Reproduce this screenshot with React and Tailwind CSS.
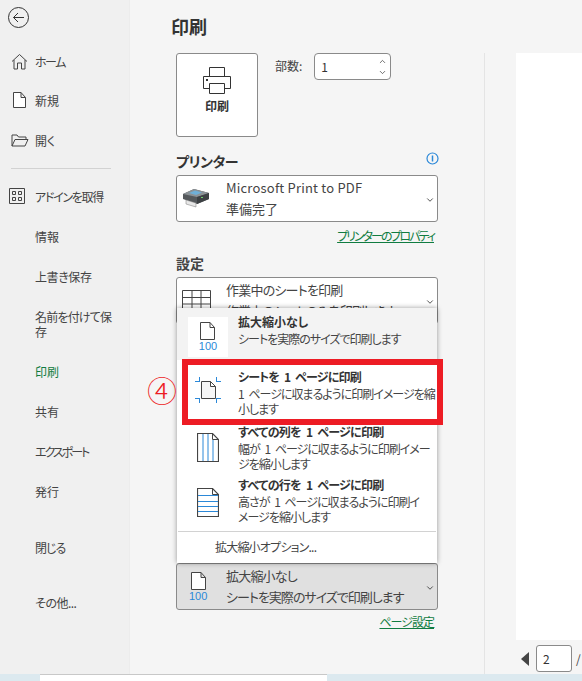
import React from 'react';
import { ChevronDown, ChevronUp } from 'lucide-react';

const FONT = "font-['Noto_Sans_CJK_JP','Noto_Sans',sans-serif] [font-feature-settings:'palt']";

const PageIcon = ({ x = 0, y = 0, w = 14, h = 19 }) => (
    <path
        d={`M${x + 0.5} ${y + 0.5}H${x + w - 5}L${x + w - 0.5} ${y + 5.5}V${y + h - 0.5}H${x + 0.5}ZM${x + w - 5} ${y + 0.5}V${y + 5.5}H${x + w - 0.5}`}
        fill="#fff"
        stroke="#444"
        strokeWidth="1"
    />
);

const Page100 = () => (
    <div className="flex flex-col items-center">
        <svg width="15" height="18" viewBox="0 0 15 18"><PageIcon w={15} h={18} /></svg>
        <span className="font-['Liberation_Sans',sans-serif] text-[11px] leading-[11px] text-[#2b88d8] mt-[1px]">100</span>
    </div>
);

const SideItem = ({ icon, label, className = '', labelClass = '' }) => (
    <div className={`relative flex items-center pl-[35px] text-[12px] leading-[15px] text-[#444] ${className}`}>
        {icon && <div className="absolute left-[9px] top-0 bottom-0 flex items-center">{icon}</div>}
        <span className={`whitespace-pre-line ${labelClass}`}>{label}</span>
    </div>
);

const Sidebar = () => (
    <div className="w-[130px] shrink-0 bg-[#f0f0f0] border-r border-[#ececec] flex flex-col">
        <div className="h-[41px] pl-[8px] pt-[7px]">
            <svg width="21" height="21" viewBox="0 0 21 21" fill="none" stroke="#333">
                <circle cx="10.5" cy="10.5" r="10" />
                <path d="M16 10.5H5.5M10 6l-4.5 4.500L10 15" />
            </svg>
        </div>
        <SideItem
            className="h-[40px]"
            labelClass="tracking-[-1.5px]"
            label="ホーム"
            icon={
                <svg width="17" height="17" viewBox="0 0 17 17" fill="none" stroke="#444" className="ml-[2px]">
                    <path d="M1 8.500L8.500 1.500l7.500 7M3 7v9h3.500v-6h4v6H14V7" />
                </svg>
            }
        />
        <SideItem
            className="h-[39px]"
            label="新規"
            icon={
                <svg width="14" height="17" viewBox="0 0 14 17" className="ml-[4px]"><PageIcon w={13} h={16} /></svg>
            }
        />
        <SideItem
            className="h-[40px]"
            label="開く"
            icon={
                <svg width="18" height="13" viewBox="0 0 18 13" fill="none" stroke="#444" className="ml-[2px]">
                    <path d="M1 12V1h5l1.500 2H15v2.500M1 12l3-6.500h13L14 12Z" />
                </svg>
            }
        />
        <div className="mt-[8px] ml-[11px] w-[100px] h-[1px] bg-[#d2d2d2]" />
        <SideItem
            className="h-[54px]"
            labelClass="tracking-[-1.3px]"
            label="アドインを取得"
            icon={
                <svg width="16" height="16" viewBox="0 0 16 16" fill="none" stroke="#444">
                    <path d="M.5.500h15v15H.5zM3.500 3.500h3v3h-3zM9.500 3.500h3v3h-3zM3.500 9.500h3v3h-3zM9.500 9.500h3v3h-3z" />
                </svg>
            }
        />
        <SideItem className="h-[26px]" label="情報" />
        <SideItem className="h-[54px]" labelClass="tracking-[-0.4px]" label="上書き保存" />
        <div className="h-[6px]" />
        <SideItem className="h-[30px]" labelClass="tracking-[-0.8px]" label={'名前を付けて保\n存'} />
        <div className="h-[23px]" />
        <SideItem className="h-[18px] !text-[#107c41]" label="印刷" />
        <SideItem className="h-[62px]" label="共有" />
        <SideItem className="h-[18px]" labelClass="tracking-[-2px]" label="エクスポート" />
        <SideItem className="h-[62px]" label="発行" />
        <div className="h-[6px]" />
        <SideItem className="h-[38px]" labelClass="tracking-[-1px]" label="閉じる" />
        <SideItem className="h-[72px]" labelClass="tracking-[-0.5px]" label="その他..." />
    </div>
);

const Dropdown = ({ icon, line1, line2, line1Class = '', line2Class = '', iconClass = 'pl-[5px]', className = 'bg-white' }) => (
    <div className={`relative h-[47px] rounded-[3px] border border-[#8a8a8a] flex items-center pl-[49px] pr-[20px] pb-[2px] text-[13px] text-[#444] ${className}`}>
        <div className={`absolute left-0 w-[49px] inset-y-0 flex items-center ${iconClass}`}>{icon}</div>
        <div className="flex flex-col gap-[4px] leading-[17px] whitespace-nowrap">
            <span className={line1Class}>{line1}</span>
            <span className={line2Class}>{line2}</span>
        </div>
        <ChevronDown className="absolute right-[2px] top-[19px]" size={10} strokeWidth={2} color="#333" />
    </div>
);

const PrinterColor = () => (
    <svg width="29" height="21" viewBox="0 3 29 21">
        <path d="M1 9l11-5 15 4v6l-12 5L1 14Z" fill="#55595c" />
        <path d="M1 9l11-5 15 4-12 4Z" fill="#8c9296" />
        <path d="M7 8l6-2.500 7 2-6 2.500Z" fill="#6fb0d8" />
        <path d="M4 15l10 3 0 4-10-3Z" fill="#e8e8e8" stroke="#777" strokeWidth=".5" />
        <path d="M15 12l12-4v6l-12 5Z" fill="#3d4144" />
        <rect x="19" y="12" width="2" height="1" fill="#6fd06f" />
    </svg>
);

const SheetGrid = () => (
    <svg width="29" height="21" viewBox="0 0 29 21" fill="none" stroke="#444">
        <path d="M.5.500h28v20H.5zM.5 7.500h28M.5 14h28M10 .500v20M19 .500v20" />
    </svg>
);

const MenuItem = ({ icon, title, desc, className = '', titleClass = '', descClass = 'tracking-[-1px]' }) => (
    <div className={`flex ${className}`}>
        <div className="w-[61px] shrink-0 flex justify-center">{icon}</div>
        <div className="text-[12px] leading-[15px] text-[#444] w-[196px] [word-spacing:3px]">
            <div className={`font-bold text-[#333] ${titleClass}`}>{title}</div>
            <div className={`mt-[2px] whitespace-pre ${descClass}`}>{desc}</div>
        </div>
    </div>
);

const ScaleMenu = () => (
    <div className="absolute left-[177px] top-[308px] w-[260px] h-[255px] bg-white shadow-[0_0_5px_rgba(0,0,0,0.4)] flex flex-col">
        <MenuItem
            className="h-[52px] pt-[6px] bg-[#f3f3f3]"
            title="拡大縮小なし"
            desc="シートを実際のサイズで印刷します"
            icon={
                <div className="w-[40px] h-[40px] bg-white flex items-center justify-center mt-[3px] ml-[1px]">
                    <Page100 />
                </div>
            }
        />
        <MenuItem
            className="h-[62px] pt-[9px]"
            titleClass="tracking-[-0.8px]"
            title="シートを 1 ページに印刷"
            desc={'1 ページに収まるように印刷イメージを縮\n小します'}
            descClass="tracking-[-1px]"
            icon={
                <svg width="26" height="26" viewBox="0 0 26 26" fill="none" className="mt-[8px]">
                    <path d="M0 4.500h5M4.500 0v5M21 4.500h5M21.500 0v5M0 21.500h5M4.500 21v5M21 21.500h5M21.500 21v5" stroke="#2b88d8" />
                    <path d="M6.500 4.500h9l5 5v12h-14ZM15.500 4.500v5h5" stroke="#444" fill="#f7f7f7" />
                </svg>
            }
        />
        <MenuItem
            className="h-[55px] pt-[2px]"
            titleClass="tracking-[-0.7px]"
            title="すべての列を 1 ページに印刷"
            desc={'幅が 1 ページに収まるように印刷イメー\nジを縮小します'}
            descClass="tracking-[-1px]"
            icon={
                <svg width="22" height="29" viewBox="0 0 22 29" fill="none" className="mt-[9px]">
                    <path d="M.500.500h15l6 6v22H.500Z" fill="#fff" stroke="#444" strokeWidth="1.200" />
                    <path d="M6 1v27M11 1v27M16 7v21" stroke="#2b88d8" />
                    <path d="M15.500.500v6h6" stroke="#444" />
                </svg>
            }
        />
        <MenuItem
            className="h-[54px]"
            titleClass="tracking-[-0.7px]"
            title="すべての行を 1 ページに印刷"
            desc={'高さが 1 ページに収まるように印刷イ\nメージを縮小します'}
            descClass="tracking-[-1px]"
            icon={
                <svg width="22" height="29" viewBox="0 0 22 29" fill="none" className="mt-[11px]">
                    <path d="M.500.500h15l6 6v22H.500Z" fill="#fff" stroke="#444" strokeWidth="1.200" />
                    <path d="M1 7.500h20M1 13.500h20M1 18.500h20M1 23.500h20" stroke="#2b88d8" />
                    <path d="M15.500.500v6h6" stroke="#444" />
                </svg>
            }
        />
        <div className="mx-[1px] h-[1px] bg-[#d2d2d2]" />
        <div className="pl-[38px] pt-[7px] text-[12px] leading-[15px] text-[#444] tracking-[-0.8px]">拡大縮小オプション...</div>
    </div>
);

const App = () => (
    <div className={`relative w-[582px] h-[681px] overflow-hidden bg-[#f5f5f5] flex flex-col ${FONT}`}>
        <div className="flex h-[674px]">
            <Sidebar />
            <div className="ml-[46px] w-[262px] shrink-0 flex flex-col">
                <h1 className="-ml-[5px] mt-[14px] h-[39px] text-[18px] leading-[24px] font-bold text-[#333]">印刷</h1>
                <div className="flex">
                    <div className="w-[82px] h-[84px] bg-white rounded-[3px] border border-[#8a8a8a] flex flex-col items-center pt-[12px]">
                        <svg width="29" height="29" viewBox="0 0 29 29" fill="none" stroke="#333">
                            <path d="M6.500 10.500v-9h15v9M6.500 22.500H.500v-12h27v12h-6M6.500 17.500h15v10h-15Z" />
                            <rect x="3" y="13" width="2" height="2" fill="#333" stroke="none" />
                        </svg>
                        <span className="mt-[3px] text-[12px] leading-[16px] font-bold text-[#333]">印刷</span>
                    </div>
                    <span className="ml-[17px] mt-[5px] text-[12px] leading-[16px] text-[#444]">部数:</span>
                    <div className="relative ml-[12px] w-[77px] h-[27px] bg-white rounded-[4px] border border-[#8a8a8a] pl-[6px] text-[12px] leading-[25px] text-[#333]">
                        1
                        <ChevronUp className="absolute right-[3px] top-[3px]" size={9} strokeWidth={2} color="#444" />
                        <ChevronDown className="absolute right-[3px] top-[14px]" size={9} strokeWidth={2} color="#444" />
                    </div>
                </div>
                <div className="mt-[14px] h-[24px] flex justify-between">
                    <span className="text-[14px] leading-[20px] font-bold text-[#333] tracking-[-0.4px]">プリンター</span>
                    <svg width="13" height="13" viewBox="0 0 13 13" fill="none" stroke="#2b88d8" className="mt-[1px] mr-[-1px]">
                        <circle cx="6.500" cy="6.500" r="5.500" strokeWidth="1.200" />
                        <path d="M6.500 3.500v6" strokeWidth="1.500" />
                    </svg>
                </div>
                <Dropdown icon={<PrinterColor />} line1="Microsoft Print to PDF" line1Class="tracking-[0.2px]" line2="準備完了" />
                <div className="mt-[6px] pr-[4px] text-right text-[12px] leading-[16px] text-[#107c41] underline tracking-[-2px]">プリンターのプロパティ</div>
                <div className="mt-[10px] h-[23px] text-[14px] leading-[18px] font-bold text-[#444]">設定</div>
                <Dropdown
                    icon={<SheetGrid />}
                    line1="作業中のシートを印刷"
                    line1Class="tracking-[-0.8px]"
                    line2="作業中のシートのみを印刷します"
                    line2Class="tracking-[-1px]"
                />
                <div className="h-[239px]" />
                <Dropdown
                    className="bg-[#e0e0e0]"
                    iconClass="pl-[12px]"
                    icon={<Page100 />}
                    line1="拡大縮小なし"
                    line1Class="tracking-[-0.8px]"
                    line2="シートを実際のサイズで印刷します"
                    line2Class="tracking-[-1px]"
                />
                <div className="mt-[4px] pr-[4px] text-right text-[12px] leading-[16px] text-[#107c41] underline tracking-[-1px]">ページ設定</div>
            </div>
            <div className="ml-[46px] mt-[53px] w-[1px] bg-[#e4e4e4]" />
            <div className="ml-[31px] flex-1 flex flex-col">
                <div className="mt-[53px] h-[587px] bg-white" />
                <div className="flex items-center mt-[5px]">
                    <svg width="8" height="14" viewBox="0 0 8 14" className="ml-[5px]"><path d="M8 0v14L0 7Z" fill="#444" /></svg>
                    <div className="ml-[7px] w-[36px] h-[27px] bg-white rounded-[3px] border border-[#8a8a8a] pl-[6px] text-[12px] leading-[25px] text-[#333]">2</div>
                    <span className="ml-[4px] text-[12px] text-[#444]">/</span>
                </div>
            </div>
        </div>
        <div className="flex h-[7px] bg-[#dce9ef]">
            <div className="ml-[40px] w-[287px] bg-white border-t border-[#c8c8c8]" />
        </div>

        <ScaleMenu />
        <div className="absolute left-[182px] top-[359px] w-[261px] h-[66px] border-[6px] border-[#ed1c24]" />
        <span className="absolute left-[147px] top-[371px] text-[30px] leading-[36px] text-[#ed1c24] font-light">④</span>
    </div>
);

export default App;
